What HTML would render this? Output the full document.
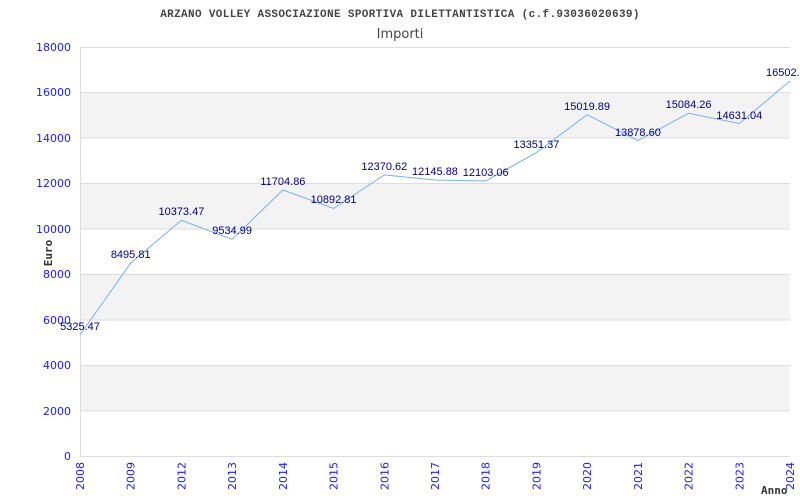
<!DOCTYPE html>
<html><head><style>body{margin:0;background:#fff}svg{display:block}</style></head><body>
<svg width="800" height="500" xmlns="http://www.w3.org/2000/svg">
<rect width="800" height="500" fill="#fff"/>
<text x="400" y="17" text-anchor="middle" font-family="Liberation Mono, monospace" font-size="11" font-weight="bold" letter-spacing="0.35" fill="#444">ARZANO VOLLEY ASSOCIAZIONE SPORTIVA DILETTANTISTICA (c.f.93036020639)</text>
<text x="400" y="38" text-anchor="middle" font-family="DejaVu Sans, sans-serif" font-size="13" fill="#444">Importi</text>
<g fill="#f3f3f3">
<rect x="80" y="92.5" width="710" height="45.4"/>
<rect x="80" y="183.4" width="710" height="45.4"/>
<rect x="80" y="274.3" width="710" height="45.4"/>
<rect x="80" y="365.2" width="710" height="45.4"/>
</g>
<g stroke="#ddd" stroke-width="1">
<line x1="80" y1="47.5" x2="790" y2="47.5"/>
<line x1="80" y1="92.5" x2="790" y2="92.5"/>
<line x1="80" y1="138" x2="790" y2="138"/>
<line x1="80" y1="183.5" x2="790" y2="183.5"/>
<line x1="80" y1="229" x2="790" y2="229"/>
<line x1="80" y1="274.5" x2="790" y2="274.5"/>
<line x1="80" y1="320" x2="790" y2="320"/>
<line x1="80" y1="365.5" x2="790" y2="365.5"/>
<line x1="80" y1="411" x2="790" y2="411"/>
<line x1="80.5" y1="47" x2="80.5" y2="456"/>
<line x1="80" y1="456.5" x2="790" y2="456.5"/>
</g>
<g font-family="DejaVu Sans, sans-serif" font-size="11" fill="#1a1aff" text-anchor="end">
<text x="71" y="51">18000</text><text x="71" y="96">16000</text><text x="71" y="142">14000</text>
<text x="71" y="187">12000</text><text x="71" y="233">10000</text><text x="71" y="278">8000</text>
<text x="71" y="324">6000</text><text x="71" y="369">4000</text><text x="71" y="415">2000</text>
<text x="71" y="460">0</text>
</g>
<g font-family="DejaVu Sans, sans-serif" font-size="11" fill="#1a1aff" text-anchor="end">
<text transform="translate(84,462) rotate(-90)">2008</text>
<text transform="translate(134.7,462) rotate(-90)">2009</text>
<text transform="translate(185.4,462) rotate(-90)">2012</text>
<text transform="translate(236.1,462) rotate(-90)">2013</text>
<text transform="translate(286.9,462) rotate(-90)">2014</text>
<text transform="translate(337.6,462) rotate(-90)">2015</text>
<text transform="translate(388.3,462) rotate(-90)">2016</text>
<text transform="translate(439,462) rotate(-90)">2017</text>
<text transform="translate(489.7,462) rotate(-90)">2018</text>
<text transform="translate(540.4,462) rotate(-90)">2019</text>
<text transform="translate(591.1,462) rotate(-90)">2020</text>
<text transform="translate(641.9,462) rotate(-90)">2021</text>
<text transform="translate(692.6,462) rotate(-90)">2022</text>
<text transform="translate(743.3,462) rotate(-90)">2023</text>
<text transform="translate(794,462) rotate(-90)">2024</text>
</g>
<text transform="translate(52,253) rotate(-90)" text-anchor="middle" font-family="DejaVu Sans Mono, monospace" font-size="11" font-weight="bold" fill="#333">Euro</text>
<text x="761" y="494" font-family="DejaVu Sans Mono, monospace" font-size="11" font-weight="bold" fill="#333">Anno</text>
<polyline fill="none" stroke="#77b0ee" stroke-width="1" points="80,335 130.7,263 181.4,220.3 232.1,239.3 282.9,190 333.6,208.5 384.3,174.9 435,180 485.7,181 536.4,152.6 587.1,114.7 637.9,140.6 688.6,113.3 739.3,123.5 790,81"/>
<g font-family="Liberation Sans, sans-serif" font-size="11" fill="#000080" text-anchor="middle">
<text x="80" y="330">5325.47</text>
<text x="130.7" y="258">8495.81</text>
<text x="181.4" y="215">10373.47</text>
<text x="232.1" y="234">9534.99</text>
<text x="282.9" y="185">11704.86</text>
<text x="333.6" y="203">10892.81</text>
<text x="384.3" y="170">12370.62</text>
<text x="435" y="175">12145.88</text>
<text x="485.7" y="176">12103.06</text>
<text x="536.4" y="148">13351.37</text>
<text x="587.1" y="110">15019.89</text>
<text x="637.9" y="136">13878.60</text>
<text x="688.6" y="108">15084.26</text>
<text x="739.3" y="119">14631.04</text>
<text x="766" y="76" text-anchor="start">16502.6</text>
</g>
</svg>
</body></html>
